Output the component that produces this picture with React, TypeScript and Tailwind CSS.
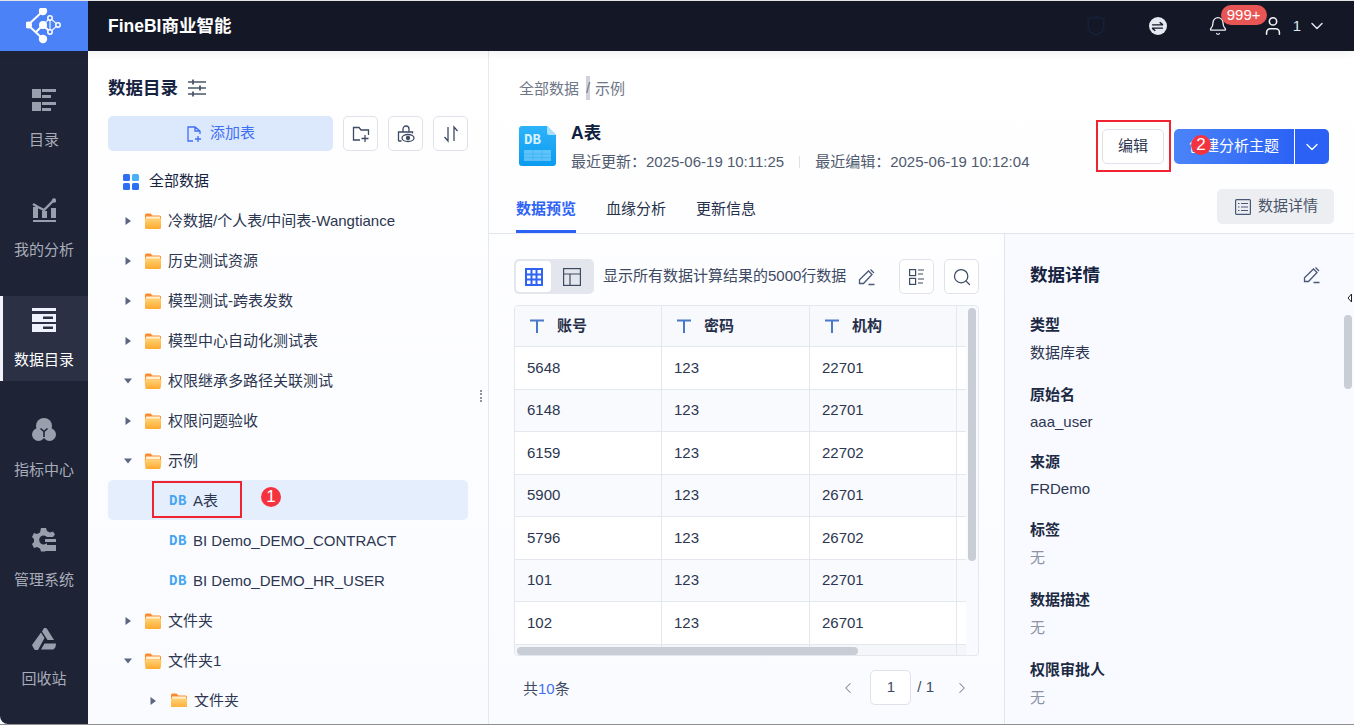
import { Bell, ChevronDown, ChevronLeft, ChevronRight, Search, User } from "lucide-react";
import type { ReactNode } from "react";

const font = { fontFamily: '"Liberation Sans", "Noto Sans CJK SC", sans-serif' };

const Logo = () => (
  <svg viewBox="0 0 36 36" className="w-[36px] h-[36px]" fill="none" stroke="#fff" strokeWidth="2">
    <path d="M17 3 2 17l15 14M10 24l7-7 7 7" />
    <path d="m24 10 8 7-8 7zM17 17l7-7" strokeWidth="1.300" opacity="0.85" />
    <circle cx="17" cy="3" r="3.200" fill="#fff" />
    <circle cx="2.500" cy="17" r="2.500" fill="#fff" />
    <circle cx="17" cy="17" r="3" fill="#fff" />
    <circle cx="17" cy="31" r="3.200" fill="#fff" />
    <circle cx="24" cy="10" r="2.200" fill="#4b82f7" strokeWidth="1.500" />
    <circle cx="32" cy="17" r="2.200" fill="#4b82f7" strokeWidth="1.500" />
    <circle cx="24" cy="24" r="2.200" fill="#4b82f7" strokeWidth="1.500" />
  </svg>
);

const CatalogIcon = () => (
  <svg viewBox="0 0 24 24" className="w-[24px] h-[24px]" fill="#9a9fae">
    <rect x="0" y="1" width="9" height="9" />
    <rect x="0" y="14" width="9" height="9" />
    <rect x="10" y="1" width="14" height="3" />
    <rect x="10" y="7" width="9" height="3" />
    <rect x="10" y="14" width="14" height="3" />
    <rect x="10" y="20" width="9" height="3" />
  </svg>
);

const AnalysisIcon = () => (
  <svg viewBox="0 0 24 24" className="w-[24px] h-[24px]">
    <path d="M1 22h23v2H1z" fill="#9a9fae" />
    <path d="M1 9h5v11H1zM10 13h5v7h-5zM19 10h5v10h-5z" fill="#9a9fae" />
    <path d="m1 6 5 3 6 3 9-9" fill="none" stroke="#9a9fae" strokeWidth="2.4" />
    <circle cx="22" cy="2.5" r="2.2" fill="#9a9fae" />
  </svg>
);

const DataIcon = () => (
  <svg viewBox="0 0 24 24" className="w-[24px] h-[24px]">
    <rect x="0" y="0" width="24" height="3" fill="#eef2ff" />
    <rect x="0" y="6" width="24" height="8" fill="#eef2ff" />
    <rect x="0" y="16" width="24" height="8" fill="#eef2ff" />
    <rect x="11" y="8.5" width="10" height="2.5" fill="#2b3044" />
    <rect x="11" y="18.5" width="10" height="2.5" fill="#2b3044" />
  </svg>
);

const MetricIcon = () => (
  <svg viewBox="0 0 24 24" className="w-[24px] h-[24px]">
    <circle cx="12" cy="8" r="8" fill="#9a9fae" />
    <circle cx="6.5" cy="16.5" r="6.5" fill="#9a9fae" />
    <circle cx="17.5" cy="16.5" r="6.5" fill="#9a9fae" />
    <path d="m8.500 10.500 3.500 3 3.500-3M12 13.500V19" fill="none" stroke="#1e2336" strokeWidth="1.600" />
  </svg>
);

const ManageIcon = () => (
  <svg viewBox="0 0 24 24" className="w-[24px] h-[24px]">
    <path d="M9 0h5l1 3 3 1.5 3-1 2 3-2 2.5H15a4.5 4.5 0 1 0 0 6v7.5h-1l-1 1H9l-1-3-3-1.5-3 1-2-4 2-2v-3l-2-2 2-4 3 1 3-1.5z" fill="#9a9fae" />
    <rect x="13" y="11" width="11" height="3" fill="#9a9fae" />
    <rect x="13" y="17" width="11" height="6" fill="#9a9fae" />
  </svg>
);

const TrashIcon = () => (
  <svg viewBox="0 0 24 24" className="w-[24px] h-[24px]" fill="#9a9fae">
    <path d="M12 0h1.5a2 2 0 0 1 1.600.9L22 12h-6.500L10 3.500z" />
    <path d="M9 4.500 12.500 10 6 22H3.500a1.500 1.500 0 0 1-1.300-.8L0 17z" />
    <path d="M9 21.500 12.500 15.500H24l-.5 3.500-2 2.500z" />
  </svg>
);

const Folder = ({ open }: { open?: boolean }) => (
  <svg viewBox="0 0 18 18" className="w-[18px] h-[18px] shrink-0">
    <defs>
      <linearGradient id="folderFront" x1="0" y1="0" x2="0" y2="1">
        <stop offset="0" stopColor="#ffd277" />
        <stop offset="1" stopColor="#ffa92e" />
      </linearGradient>
    </defs>
    <path d="M1 3a1.500 1.500 0 0 1 1.500-1.500h4l2 2H15.500A1.500 1.500 0 0 1 17 5v3H1z" fill="#fb8a2e" />
    <rect x="2" y="4.500" width="14" height="3" fill="#fff1d2" />
    {open ? (
      <path d="M.5 7.500h17l-.8 8a1.500 1.500 0 0 1-1.500 1.500H2.800a1.500 1.500 0 0 1-1.500-1.500z" fill="url(#folderFront)" />
    ) : (
      <path d="M1 6.500h16v9a1.500 1.500 0 0 1-1.500 1.500h-13A1.500 1.500 0 0 1 1 15.500z" fill="url(#folderFront)" />
    )}
  </svg>
);

const Caret = ({ open }: { open?: boolean }) => (
  <svg viewBox="0 0 10 10" className="w-[10px] h-[10px] shrink-0" fill="#5b6680">
    {open ? <path d="M1 2.500h8L5 7.500z" /> : <path d="M2.500 1v8l5.500-4z" />}
  </svg>
);

const PenIcon = () => (
  <svg viewBox="0 0 18 18" className="w-[18px] h-[18px]" fill="none" stroke="#4a5878" strokeWidth="1.300">
    <path d="M1.500 15.500v-3.800L10.500 3l3.500 3.500-8.500 9zM12.500 1.500l3.500 3.500M10.500 16.500h6" />
  </svg>
);

const IconButton = ({ children }: { children: ReactNode }) => (
  <div className="w-[35px] h-[35px] rounded-[5px] border border-[#dfe2ea] bg-white flex items-center justify-center">
    {children}
  </div>
);

const Marker = ({ n, className }: { n: number; className: string }) => (
  <div className={`absolute w-[20px] h-[20px] rounded-full bg-[#f5333f] text-white text-[17px] flex items-center justify-center ${className}`}>
    {n}
  </div>
);

const navItems = [
  { label: "目录", icon: <CatalogIcon /> },
  { label: "我的分析", icon: <AnalysisIcon /> },
  { label: "数据目录", icon: <DataIcon />, active: true },
  { label: "指标中心", icon: <MetricIcon /> },
  { label: "管理系统", icon: <ManageIcon /> },
];

const folders1 = [
  "冷数据/个人表/中间表-Wangtiance",
  "历史测试资源",
  "模型测试-跨表发数",
  "模型中心自动化测试表",
];

const FolderRow = ({ name, open }: { name: string; open?: boolean }) => (
  <div className="h-[40px] flex items-center pl-[15px] pt-[2px] text-[15px] text-[#2c3650]">
    <Caret open={open} />
    <span className="ml-[11px]"><Folder open={open} /></span>
    <span className="ml-[6px] whitespace-nowrap">{name}</span>
  </div>
);

const DbRow = ({ name, active }: { name: string; active?: boolean }) => (
  <div className={`h-[40px] flex items-center pl-[61px] pt-[2px] text-[15px] text-[#2c3650] rounded-[5px] ${active ? "bg-[#e5eefd]" : ""}`}>
    <span className="w-[18px] text-[14px] font-bold font-['Liberation_Mono',monospace] text-[#45a5f2] tracking-[0.5px]">DB</span>
    <span className="ml-[6px] whitespace-nowrap">{name}</span>
  </div>
);

const rows = [
  ["5648", "123", "22701"],
  ["6148", "123", "22701"],
  ["6159", "123", "22702"],
  ["5900", "123", "26701"],
  ["5796", "123", "26702"],
  ["101", "123", "22701"],
  ["102", "123", "26701"],
];

const columnWidths = ["w-[147px]", "w-[148px]", "w-[147px]"];

const details = [
  { label: "类型", value: "数据库表", gap: "mb-[22px]" },
  { label: "原始名", value: "aaa_user", latin: true, gap: "mb-[20px]" },
  { label: "来源", value: "FRDemo", latin: true, gap: "mb-[21px]" },
  { label: "标签", value: "无", muted: true, gap: "mb-[22px]" },
  { label: "数据描述", value: "无", muted: true, gap: "mb-[22px]" },
  { label: "权限审批人", value: "无", muted: true, gap: "mb-[22px]" },
];

export default function App() {
  return (
    <div style={font} className="relative w-[1354px] h-[725px] overflow-hidden flex flex-col bg-gradient-to-b from-white to-[#fafbff] border-b border-[#8f8f8f]">
      <header className="relative z-10 h-[51px] shrink-0 flex border-t border-[#e4e4e4] bg-[#141826] shadow-[0_2px_8px_rgba(20,24,38,0.06)]">
        <div className="w-[88px] bg-[#4b82f7] flex items-center justify-center">
          <Logo />
        </div>
        <div className="ml-[20px] flex items-center text-[17.5px] font-bold text-white">FineBI商业智能</div>
        <div className="ml-auto flex items-center pr-[27px] relative">
          <svg viewBox="0 0 16 18" className="w-[18px] h-[20px] mr-[44px]" fill="none" stroke="#16203a" strokeWidth="1.500">
            <path d="M1 2.500 8 1l7 1.500V10c0 3.500-3 6-7 7-4-1-7-3.500-7-7z" />
          </svg>
          <div className="w-[18px] h-[18px] rounded-full bg-[#e4e9f2] flex items-center justify-center mr-[41px]">
            <svg viewBox="0 0 12 12" className="w-[13px] h-[13px]" fill="none" stroke="#141826" strokeWidth="1.300">
              <path d="M1 4.500h10M8 2l3 2.500M11 7.500H1M4 10 1 7.500" />
            </svg>
          </div>
          <Bell className="w-[20px] h-[20px] text-[#e8edf5] mr-[34px]" strokeWidth={1.6} />
          <div className="absolute left-[134px] top-[4px] w-[46px] h-[20px] rounded-[10px] bg-[#e85555] text-white text-[15px] flex items-center justify-center">
            999+
          </div>
          <User className="w-[22px] h-[22px] text-[#f2f4f8] mr-[9px]" strokeWidth={1.7} />
          <span className="text-[15px] text-[#dfe4ee]">1</span>
          <ChevronDown className="w-[20px] h-[20px] text-[#dfe4ee] ml-[6px]" strokeWidth={1.8} />
        </div>
      </header>

      <div className="flex-1 flex min-h-0">
        <nav className="w-[88px] shrink-0 bg-[#1e2336] rounded-bl-[8px] flex flex-col pt-[25px] gap-[25px]">
          {navItems.map((item) => (
            <div
              key={item.label}
              className={`h-[85px] flex flex-col items-center pt-[12px] ${item.active ? "bg-[#2b3044] border-l-[3px] border-[#f1f3f8] pr-[3px]" : ""}`}
            >
              {item.icon}
              <span className={`mt-[18px] h-[20px] leading-[20px] text-[15px] whitespace-nowrap ${item.active ? "text-white" : "text-[#a8adb9]"}`}>
                {item.label}
              </span>
            </div>
          ))}
          <div className="-mt-[10px] flex flex-col items-center pt-[12px]">
            <TrashIcon />
            <span className="mt-[17px] h-[20px] leading-[20px] text-[15px] text-[#a8adb9]">回收站</span>
          </div>
        </nav>

        <aside className="relative w-[401px] shrink-0 border-r border-[#e6e8ef] px-[20px] pt-[24px] flex flex-col">
          <div className="h-[26px] flex items-center">
            <span className="text-[17.5px] font-bold text-[#16233f]">数据目录</span>
            <svg viewBox="0 0 18 18" className="w-[18px] h-[18px] ml-[10px]" fill="none" stroke="#4a5568" strokeWidth="1.300">
              <path d="M0 3h18M0 9h18M0 15h18" />
              <path d="M5 0.500v5M12 6.500v5M5 12.500v5" strokeWidth="1.800" />
            </svg>
          </div>
          <div className="mt-[15px] flex gap-[10px]">
            <div className="w-[225px] h-[35px] rounded-[5px] bg-[#dce8fc] flex items-center justify-center text-[15px] text-[#3f6ff5]">
              <svg viewBox="0 0 16 16" className="w-[16px] h-[16px] mr-[8px]" fill="none" stroke="#3f6ff5" strokeWidth="1.300">
                <path d="M7 15H2V1h7l5 4v3M9 1v4h5M12 10v6M9 13h6" />
              </svg>
              添加表
            </div>
            <IconButton>
              <svg viewBox="0 0 18 18" className="w-[18px] h-[18px]" fill="none" stroke="#3d4a63" strokeWidth="1.300">
                <path d="M8 15H1.500V2.500H7L9 5h7.500v5M13 10v7M9.500 13.500h7" />
              </svg>
            </IconButton>
            <IconButton>
              <svg viewBox="0 0 18 18" className="w-[18px] h-[18px]" fill="none" stroke="#3d4a63" strokeWidth="1.300">
                <path d="M6 7V4a3 3 0 0 1 6 0v3M1.500 16V7h14v1.500M1.500 16h3" />
                <ellipse cx="11" cy="13" rx="6" ry="3.500" />
                <circle cx="11" cy="13" r="1.500" fill="#3d4a63" />
              </svg>
            </IconButton>
            <IconButton>
              <svg viewBox="0 0 18 18" className="w-[18px] h-[18px]" fill="none" stroke="#3d4a63" strokeWidth="1.300">
                <path d="M6 2v14L2.500 12M12 16V2l3.500 4" />
              </svg>
            </IconButton>
          </div>
          <div className="mt-[10px] h-[546px] overflow-hidden">
            <div className="h-[39px] flex items-center pl-[15px] pt-[2px] text-[15px] text-[#16233f]">
              <svg viewBox="0 0 16 16" className="w-[16px] h-[16px]">
                <rect x="0" y="0" width="7" height="7" rx="1.500" fill="#2d6ff2" />
                <rect x="9" y="0" width="7" height="7" rx="1.500" fill="#4ab0f7" />
                <rect x="0" y="9" width="7" height="7" rx="1.500" fill="#2d6ff2" />
                <rect x="9" y="9" width="7" height="7" rx="1.500" fill="#2d6ff2" />
              </svg>
              <span className="ml-[10px]">全部数据</span>
            </div>
            {folders1.map((name) => (
              <FolderRow key={name} name={name} />
            ))}
            <FolderRow name="权限继承多路径关联测试" open />
            <FolderRow name="权限问题验收" />
            <FolderRow name="示例" open />
            <DbRow name="A表" active />
            <DbRow name="BI Demo_DEMO_CONTRACT" />
            <DbRow name="BI Demo_DEMO_HR_USER" />
            <FolderRow name="文件夹" />
            <FolderRow name="文件夹1" open />
            <div className="h-[40px] flex items-center pl-[40px] pt-[2px] text-[15px] text-[#2c3650]">
              <Caret />
              <span className="ml-[12px]"><Folder /></span>
              <span className="ml-[6px]">文件夹</span>
            </div>
          </div>
          <span className="absolute left-[392px] top-[339px] w-[2px] h-[12px] border-l-2 border-dotted border-[#8c93a3]" />
        </aside>

        <main className="flex-1 min-w-0 flex flex-col">
          <div className="pt-[25px] pl-[30px] pr-[25px]">
            <div className="h-[24px] flex items-center text-[15px] text-[#6f7787]">
              <span className="pt-[2px]">全部数据</span>
              <span className="ml-[7px] w-[4px] h-[24px] bg-[#cfd2da] text-[#6f7787] leading-[24px]">/</span>
              <span className="ml-[5px] pt-[2px]">示例</span>
            </div>
            <div className="mt-[26px] h-[40px] flex">
              <svg viewBox="0 0 37 40" className="w-[37px] h-[40px] shrink-0">
                <defs>
                  <linearGradient id="fileBg" x1="0" y1="0" x2="0" y2="1">
                    <stop offset="0" stopColor="#2db3fa" />
                    <stop offset="1" stopColor="#0a9bf0" />
                  </linearGradient>
                </defs>
                <path d="M3 0h25l9 9v28a3 3 0 0 1-3 3H3a3 3 0 0 1-3-3V3a3 3 0 0 1 3-3z" fill="url(#fileBg)" />
                <path d="M28 0l9 9h-7a2 2 0 0 1-2-2z" fill="#a8e0fd" />
                <text x="5" y="18" fontSize="14" fontWeight="700" fill="#d8f1ff" fontFamily="Liberation Mono, monospace">DB</text>
                <rect x="5" y="24" width="27" height="11" fill="#7fd0fb" opacity="0.7" />
                <path d="M5 28h27M5 31.500h27M14 24v11M23 24v11" stroke="#2db3fa" strokeWidth="0.600" />
              </svg>
              <div className="ml-[15px]">
                <div className="text-[17.5px] font-bold text-[#10203f] leading-[14px]">A表</div>
                <div className="mt-[12px] h-[20px] flex items-center text-[15px] text-[#505a6e] whitespace-nowrap">
                  最近更新：2025-06-19 10:11:25
                  <span className="mx-[15px] w-px h-[12px] bg-[#dfe2e8]" />
                  最近编辑：2025-06-19 10:12:04
                </div>
              </div>
              <div className="ml-auto mt-[3px] flex h-[35px]">
                <div className="relative w-[62px] rounded-[5px] border border-[#dfe2ea] bg-white text-[15px] text-[#2c3650] flex items-center justify-center">
                  编辑
                  <div className="absolute -left-[7px] -top-[10px] w-[75px] h-[52px] border-2 border-[#f02430]" />
                </div>
                <div className="relative ml-[10px] w-[120px] rounded-l-[5px] bg-gradient-to-r from-[#4b84f8] to-[#2b62f5] text-white text-[15px] flex items-center justify-center">
                  创建分析主题
                  <Marker n={2} className="left-[17px] top-[6px]" />
                </div>
                <div className="ml-px w-[34px] rounded-r-[5px] bg-[#2b62f5] flex items-center justify-center">
                  <ChevronDown className="w-[20px] h-[20px] text-white" strokeWidth={1.6} />
                </div>
              </div>
            </div>
          </div>

          <div className="mt-[23px] h-[45px] shrink-0 border-b border-[#e3e5ec] pl-[27px] pr-[20px] flex">
            <div className="w-[60px] h-[44px] border-b-[3px] border-[#2b62f5] pt-[10px] text-[15px] font-bold text-[#2f63f5] leading-[20px] text-center whitespace-nowrap">
              数据预览
            </div>
            <div className="ml-[30px] pt-[10px] text-[15px] text-[#26304a] leading-[20px]">血缘分析</div>
            <div className="ml-[30px] pt-[10px] text-[15px] text-[#26304a] leading-[20px]">更新信息</div>
            <div className="ml-auto w-[117px] h-[35px] pl-[2px] rounded-[5px] bg-[#eceef2] flex items-center justify-center text-[15px] text-[#4a5568]">
              <svg viewBox="0 0 16 16" className="w-[16px] h-[16px] mr-[7px]" fill="none" stroke="#4a5878" strokeWidth="1.200">
                <rect x="0.600" y="0.600" width="14.800" height="14.800" rx="1" />
                <path d="M3 4.500h1.500M6 4.500h7M3 8h1.500M6 8h7M3 11.500h1.500M6 11.500h7" />
              </svg>
              数据详情
            </div>
          </div>

          <div className="flex-1 flex min-h-0">
            <section className="w-[515px] shrink-0 px-[25px] pt-[25px]">
              <div className="flex items-center h-[35px]">
                <div className="w-[80px] h-[35px] rounded-[5px] bg-[#e4e6ed] flex items-center px-[2px]">
                  <div className="w-[35px] h-[31px] rounded-[4px] bg-white flex items-center justify-center">
                    <svg viewBox="0 0 18 18" className="w-[18px] h-[18px]" fill="none" stroke="#2f63f5" strokeWidth="2">
                      <rect x="1" y="1" width="16" height="16" />
                      <path d="M6.500 1v16M11.500 1v16M1 6.500h16M1 11.500h16" />
                    </svg>
                  </div>
                  <div className="flex-1 flex items-center justify-center pl-[1px]">
                    <svg viewBox="0 0 18 18" className="w-[18px] h-[18px]" fill="none" stroke="#3d4a63" strokeWidth="1.200">
                      <rect x="0.600" y="0.600" width="16.800" height="16.800" />
                      <path d="M1 6h16M7 6v11" />
                    </svg>
                  </div>
                </div>
                <span className="ml-[9px] text-[15px] text-[#3d4a63] whitespace-nowrap">显示所有数据计算结果的5000行数据</span>
                <span className="ml-[12px]"><PenIcon /></span>
                <div className="ml-auto flex gap-[10px]">
                  <IconButton>
                    <svg viewBox="0 0 16 16" className="w-[16px] h-[16px]" fill="none" stroke="#3d4a63" strokeWidth="1.200">
                      <rect x="0.600" y="0.600" width="6" height="6" />
                      <rect x="0.600" y="9.400" width="6" height="6" />
                      <path d="M9 1h6M9 5h5M9 10h6M9 14h5" />
                    </svg>
                  </IconButton>
                  <IconButton>
                    <Search className="w-[20px] h-[20px] text-[#3d4a63]" strokeWidth={1.5} />
                  </IconButton>
                </div>
              </div>

              <div className="mt-[11px] h-[351px] rounded-[4px] border border-[#e5e7ef] overflow-hidden flex bg-[#f9faff]">
                <div className="w-[451px] shrink-0 flex flex-col">
                  <div className="h-[41px] shrink-0 flex bg-[#f8f9fd] border-b border-[#e5e7ef] text-[15px] font-bold text-[#26304a]">
                    {["账号", "密码", "机构"].map((name, j) => (
                      <div key={name} className={`${columnWidths[j]} shrink-0 border-r border-[#e5e7ef] flex items-center pl-[15px]`}>
                        <svg viewBox="0 0 14 14" className="w-[14px] h-[14px] mr-[13px]" fill="none" stroke="#4a78c8" strokeWidth="2">
                          <path d="M0 1.500h14M7 1.500V14" />
                        </svg>
                        {name}
                      </div>
                    ))}
                    <div className="flex-1" />
                  </div>
                  {rows.map((row, i) => (
                    <div key={i} className={`h-[42.500px] shrink-0 flex border-b border-[#e5e7ef] text-[15px] text-[#2c3650] ${i % 2 === 1 ? "bg-[#f9fafd]" : "bg-white"}`}>
                      {row.map((cell, j) => (
                        <div key={j} className={`${columnWidths[j]} shrink-0 border-r border-[#e5e7ef] flex items-center pl-[12px]`}>
                          {cell}
                        </div>
                      ))}
                      <div className="flex-1" />
                    </div>
                  ))}
                  <div className="relative flex-1 flex bg-[#f5f6fa]">
                    <div className="w-[147px] border-r border-[#e5e7ef]" />
                    <div className="w-[148px] border-r border-[#e5e7ef]" />
                    <div className="w-[147px] border-r border-[#e5e7ef]" />
                    <div className="absolute left-[2px] top-[2px] w-[341px] h-[8px] rounded-full bg-[#c9cdd6]" />
                  </div>
                </div>
                <div className="flex-1 pl-[2px] pt-[2px]">
                  <div className="w-[8px] h-[253px] rounded-full bg-[#c9cdd6]" />
                </div>
              </div>

              <div className="mt-[14px] h-[35px] flex items-center pl-[9px] text-[15px] text-[#3d4a63]">
                <span className="pt-[3px]">共<span className="text-[#3f6ff5]">10</span>条</span>
                <ChevronLeft className="ml-auto w-[18px] h-[18px] text-[#7b8496]" strokeWidth={1.4} />
                <div className="ml-[13px] w-[41px] h-[35px] rounded-[5px] border border-[#dfe2ea] bg-white flex items-center justify-center">1</div>
                <span className="ml-[6px]">/ 1</span>
                <ChevronRight className="ml-[19px] mr-[8px] w-[18px] h-[18px] text-[#7b8496]" strokeWidth={1.4} />
              </div>
            </section>

            <section className="relative flex-1 min-w-0 border-l border-[#e3e5ec] bg-[#f9faff] pl-[25px] pt-[29px]">
              <div className="h-[24px] flex items-center justify-between pr-[33px]">
                <span className="text-[17.5px] font-bold text-[#16233f]">数据详情</span>
                <PenIcon />
              </div>
              <div className="mt-[28px]">
                {details.map((d) => (
                  <div key={d.label} className={d.gap}>
                    <div className="h-[20px] leading-[20px] text-[15px] font-bold text-[#1c2a44]">{d.label}</div>
                    <div className={`h-[20px] leading-[20px] text-[15px] ${d.latin ? "mt-[7px]" : "mt-[8px]"} ${d.muted ? "text-[#8b93a4]" : "text-[#2c3650]"}`}>
                      {d.value}
                    </div>
                  </div>
                ))}
              </div>
              <div className="absolute right-[2px] top-[81px] w-[8px] h-[74px] rounded-full bg-[#c9cdd6]" />
            </section>
          </div>
        </main>
      </div>

      {/* annotations over the tree */}
      <div className="absolute left-[152px] top-[481px] w-[90px] h-[37px] border-2 border-[#f02430]" />
      <Marker n={1} className="left-[261px] top-[487px]" />
      <svg viewBox="0 0 8 10" className="absolute left-[1347px] top-[293px] w-[8px] h-[10px]" fill="#fff" stroke="#222" strokeWidth="1">
        <path d="M4.500 1 1 5l3.500 4z" />
      </svg>
    </div>
  );
}
